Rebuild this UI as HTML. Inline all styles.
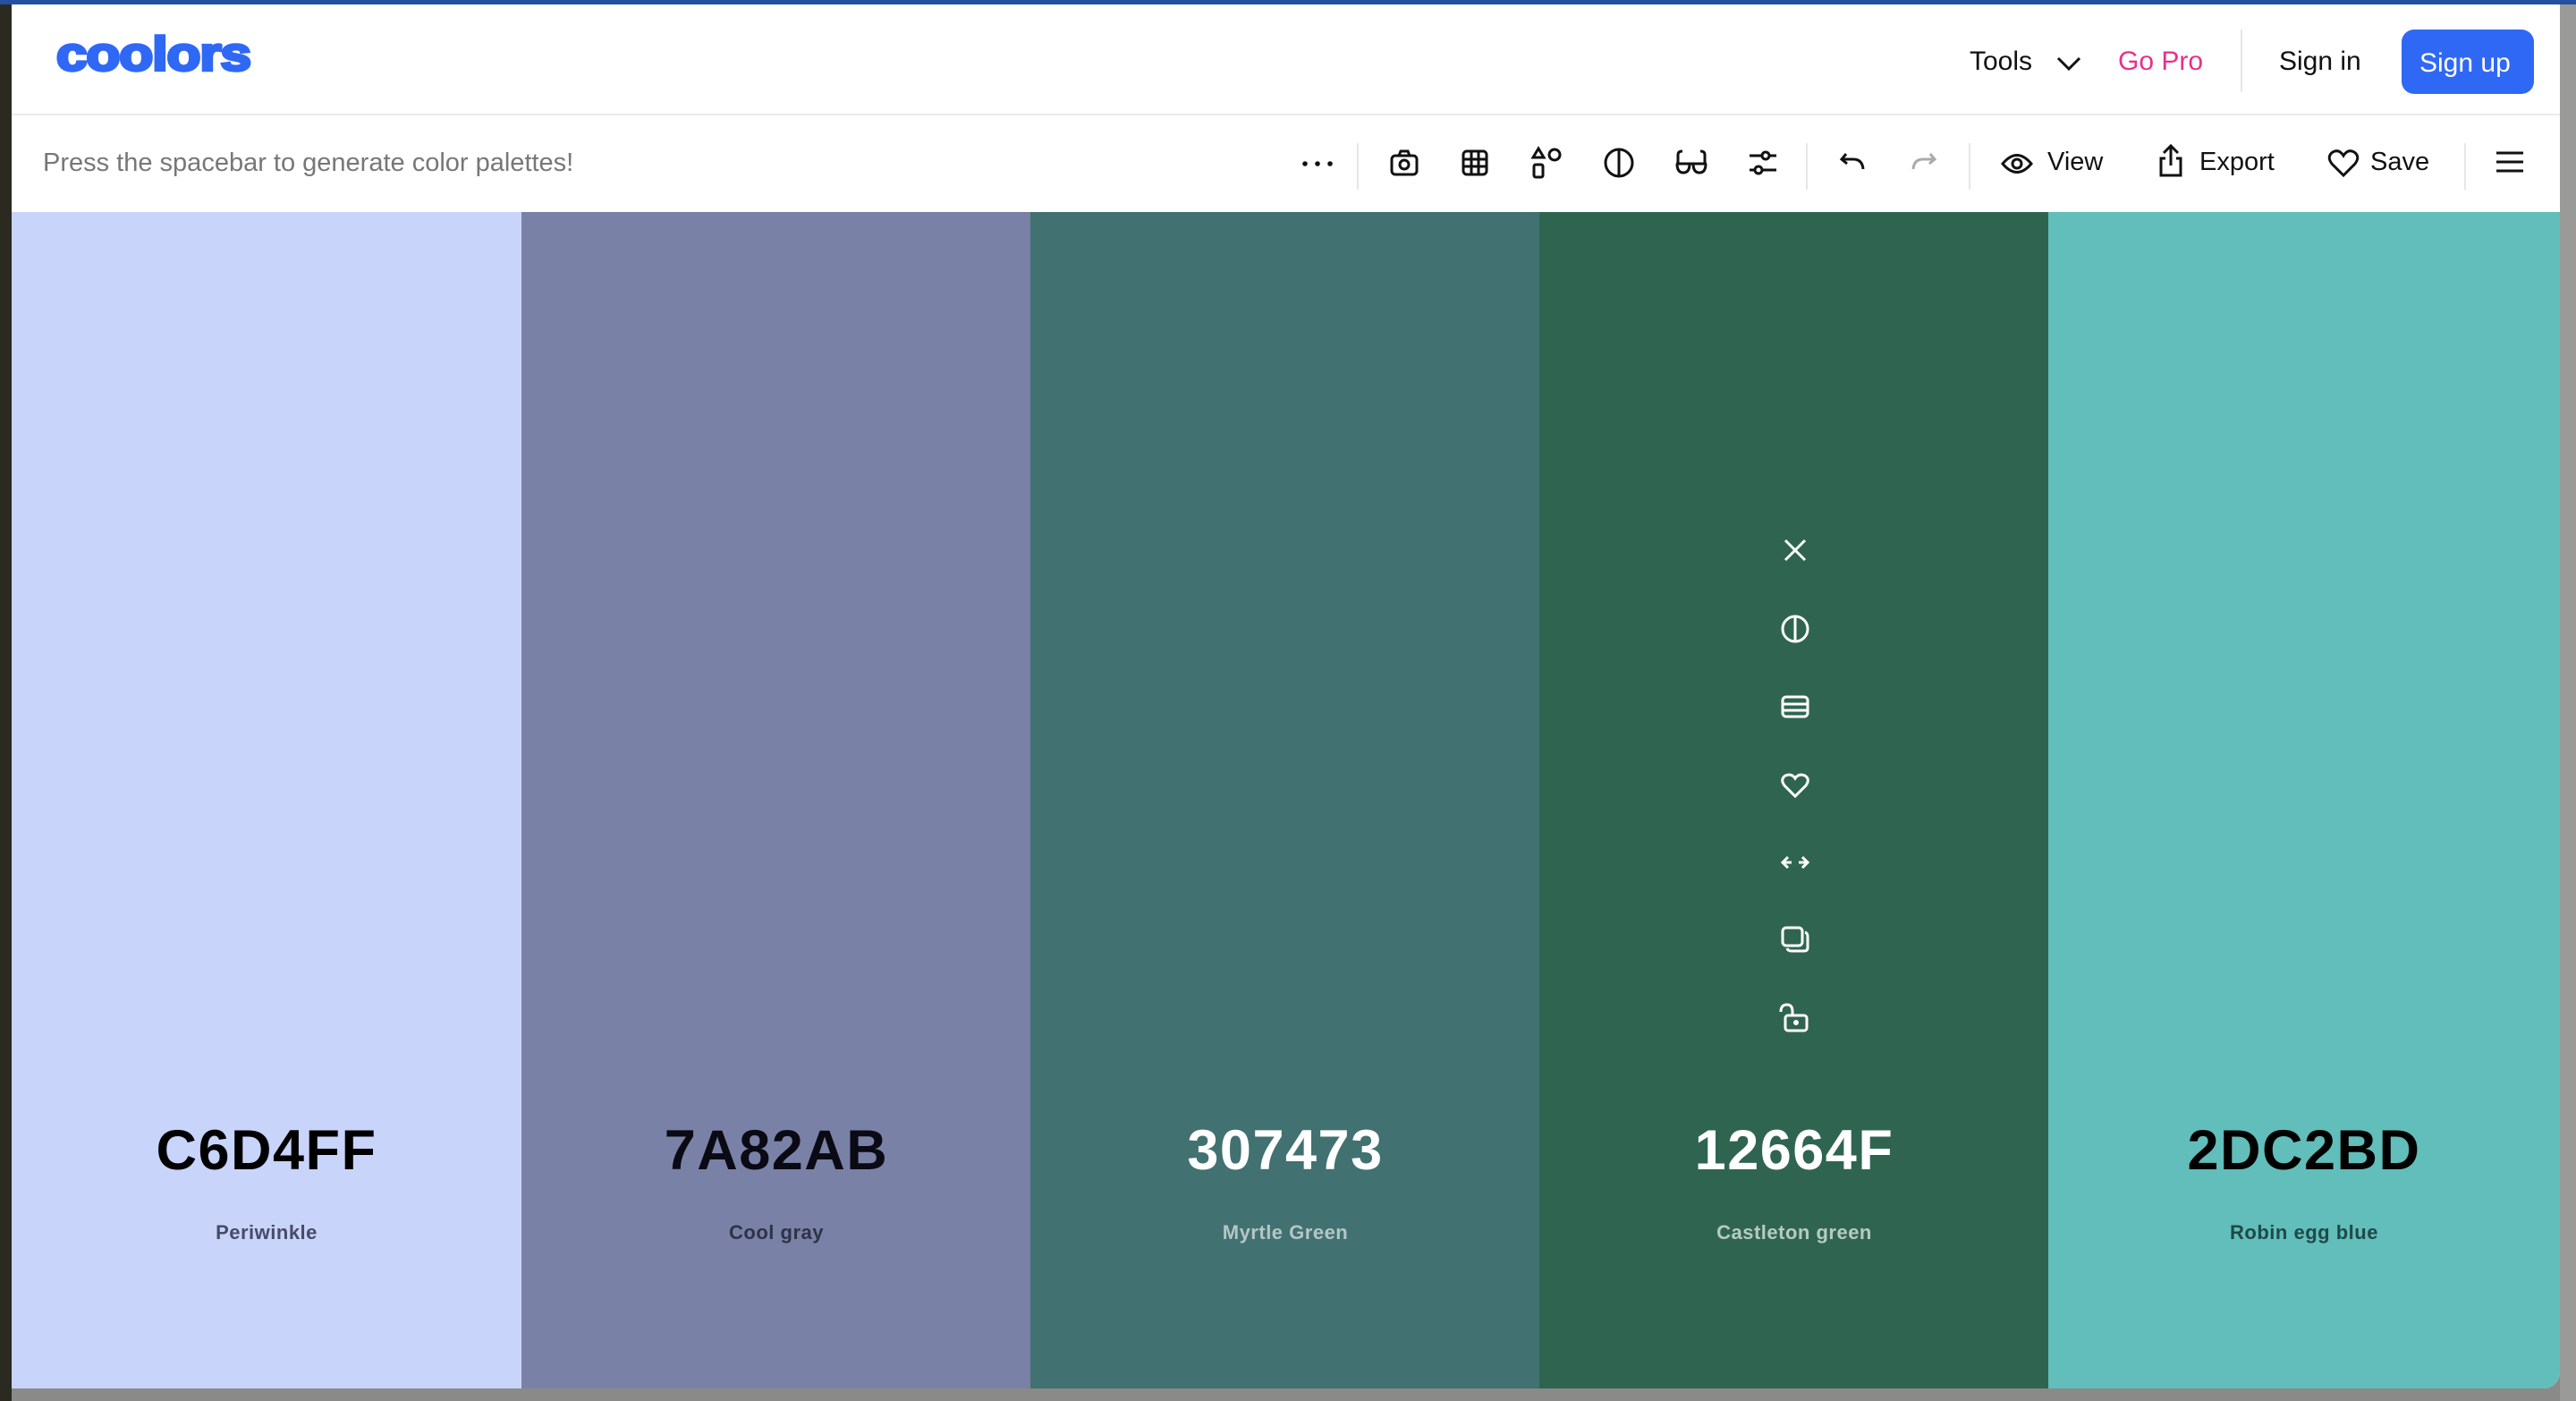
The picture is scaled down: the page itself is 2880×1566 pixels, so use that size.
<!DOCTYPE html>
<html><head><meta charset="utf-8"><style>
*{margin:0;padding:0;box-sizing:border-box}
body{width:2880px;height:1566px;overflow:hidden;background:#8a8a88;font-family:"Liberation Sans",sans-serif;position:relative}
.abs{position:absolute}
#leftbg{left:0;top:0;width:13px;height:1566px;background:#2a2a20}
#rightbg{left:2862px;top:0;width:18px;height:1566px;background:#9a9a98}
#topbar{left:0;top:0;width:2880px;height:5px;background:#2350a0}
#win{left:13px;top:5px;width:2849px;height:1547px;background:#fff;border-radius:0 0 18px 18px;overflow:hidden}
#hdrline{left:0;top:122px;width:2849px;height:2px;background:#ebebeb}
.col{position:absolute;top:237px;height:1315px;width:570px}
.hex{position:absolute;top:1013px;width:100%;text-align:center;font-size:63px;font-weight:700;letter-spacing:1.5px;line-height:72px}
.nm{position:absolute;top:1128px;width:100%;text-align:center;font-size:22px;font-weight:700;letter-spacing:.5px;line-height:26px}
.t{position:absolute;font-size:30px;color:#111;white-space:nowrap}
.div{position:absolute;width:2px;background:#e6e6e6}
svg{position:absolute;overflow:visible}
</style></head><body>
<div class="abs" id="leftbg"></div>
<div class="abs" id="rightbg"></div>
<div class="abs" id="topbar"></div>
<div class="abs" id="win">
 <div class="abs" id="hdrline"></div>
 <div class="t" style="left:50px;top:30px;font-size:62px;line-height:62px;font-weight:900;color:#2f68f5;letter-spacing:-1px;-webkit-text-stroke:4px #2f68f5;transform:scaleX(1.0) scaleY(0.85);transform-origin:left top">coolors</div>
 <div class="t" style="left:2189px;top:47px">Tools</div>
 <svg style="left:2285px;top:56px" width="30" height="20"><path d="M3 4 L15 16 L27 4" fill="none" stroke="#111" stroke-width="3"/></svg>
 <div class="t" style="left:2355px;top:47px;color:#e8308c">Go Pro</div>
 <div class="div" style="left:2492px;top:28px;height:70px"></div>
 <div class="t" style="left:2535px;top:47px">Sign in</div>
 <div class="abs" style="left:2672px;top:28px;width:148px;height:72px;background:#2f68f5;border-radius:14px"></div>
 <div class="t" style="left:2692px;top:49px;color:#fff">Sign up</div>

 <div class="t" style="left:35px;top:161px;font-size:29px;color:#777">Press the spacebar to generate color palettes!</div>
 <svg style="left:1440px;top:168px" width="40" height="20"><circle cx="6" cy="10" r="2.8" fill="#111"/><circle cx="20" cy="10" r="2.8" fill="#111"/><circle cx="34" cy="10" r="2.8" fill="#111"/></svg>
 <div class="div" style="left:1504px;top:155px;height:52px"></div>
 <svg style="left:1541px;top:162px" width="32" height="30" fill="none" stroke="#111" stroke-width="3"><rect x="2" y="7" width="28" height="21" rx="4"/><path d="M10 7 L12 2 H20 L22 7"/><circle cx="16" cy="17" r="5"/></svg>
 <svg style="left:1621px;top:162px" width="30" height="30" fill="none" stroke="#111" stroke-width="3"><rect x="2" y="2" width="26" height="26" rx="4"/><path d="M11 2V28M19 2V28M2 11H28M2 19H28"/></svg>
 <svg style="left:1699px;top:159px" width="36" height="36" fill="none" stroke="#111" stroke-width="3"><path d="M8 2 L14 12 H2 Z"/><circle cx="26" cy="9" r="6"/><rect x="3" y="20" width="10" height="14" rx="2"/></svg>
 <svg style="left:1780px;top:160px" width="34" height="34" fill="none" stroke="#111" stroke-width="3"><circle cx="17" cy="17" r="15"/><path d="M17 2V32"/></svg>
 <svg style="left:1859px;top:162px" width="38" height="28" fill="none" stroke="#111" stroke-width="3"><path d="M4 16 V6 Q4 2 9 2 M34 16 V6 Q34 2 29 2 M2 16 H36"/><path d="M3 16 Q3 26 10 26 Q17 26 17 16 M21 16 Q21 26 28 26 Q35 26 35 16"/></svg>
 <svg style="left:1941px;top:159px" width="34" height="36" fill="none" stroke="#111" stroke-width="3"><path d="M2 10H32M2 26H32"/><circle cx="20" cy="10" r="4" fill="#fff"/><circle cx="12" cy="26" r="4" fill="#fff"/></svg>
 <div class="div" style="left:2006px;top:155px;height:52px"></div>
 <svg style="left:2043px;top:164px" width="30" height="24" fill="none" stroke="#111" stroke-width="3"><path d="M8 3 L3 9 L9 14 M3 9 H16 Q26 9 27 20"/></svg>
 <svg style="left:2123px;top:164px" width="30" height="24" fill="none" stroke="#aaa" stroke-width="3"><path d="M22 3 L27 9 L21 14 M27 9 H14 Q4 9 3 20"/></svg>
 <div class="div" style="left:2188px;top:155px;height:52px"></div>
 <svg style="left:2224px;top:165px" width="36" height="26" fill="none" stroke="#111" stroke-width="3"><path d="M2 13 Q18 -6 34 13 Q18 32 2 13Z"/><circle cx="18" cy="13" r="5"/></svg>
 <div class="t" style="left:2276px;top:160px;font-size:29px">View</div>
 <svg style="left:2399px;top:156px" width="30" height="38" fill="none" stroke="#111" stroke-width="3"><path d="M15 24V3 M7 10 L15 2 L23 10 M9 16 H4 V35 H26 V16 H21"/></svg>
 <div class="t" style="left:2446px;top:160px;font-size:29px">Export</div>
 <svg style="left:2590px;top:162px" width="34" height="32" fill="none" stroke="#111" stroke-width="3"><path d="M17 29 L4 16 Q-2 8 5 3 Q12 -1 17 7 Q22 -1 29 3 Q36 8 30 16 Z"/></svg>
 <div class="t" style="left:2637px;top:160px;font-size:29px">Save</div>
 <div class="div" style="left:2742px;top:155px;height:52px"></div>
 <svg style="left:2778px;top:163px" width="30" height="26" stroke="#111" stroke-width="3"><path d="M0 3H30M0 13H30M0 23H30"/></svg>
</div>

<div class="col" style="left:13px;background:#c8d4fa"><div class="hex" style="color:#000">C6D4FF</div><div class="nm" style="color:#474c66">Periwinkle</div></div>
<div class="col" style="left:583px;background:#7a81a7"><div class="hex" style="color:#0a0a14">7A82AB</div><div class="nm" style="color:#2e3346">Cool gray</div></div>
<div class="col" style="left:1152px;background:#417170"><div class="hex" style="color:#fff">307473</div><div class="nm" style="color:#b4c6c6">Myrtle Green</div></div>
<div class="col" style="left:1721px;background:#2f6550"><div class="hex" style="color:#fff">12664F</div><div class="nm" style="color:#b6cbc2">Castleton green</div>
 <svg style="left:273px;top:365px" width="26" height="26" stroke="#fff" stroke-width="3"><path d="M2 2L24 24M24 2L2 24"/></svg>
 <svg style="left:270px;top:450px" width="32" height="32" fill="none" stroke="#fff" stroke-width="3"><circle cx="16" cy="16" r="14"/><path d="M16 2V30"/></svg>
 <svg style="left:270px;top:540px" width="32" height="26" fill="none" stroke="#fff" stroke-width="3"><rect x="2" y="2" width="28" height="22" rx="4"/><path d="M2 10H30M2 17H30"/></svg>
 <svg style="left:270px;top:627px" width="32" height="28" fill="none" stroke="#fff" stroke-width="3"><path d="M16 26 L4 14 Q-1 7 5 3 Q12 0 16 6 Q20 0 27 3 Q33 7 28 14 Z"/></svg>
 <svg style="left:270px;top:719px" width="32" height="16" fill="none" stroke="#fff" stroke-width="3"><path d="M8 2 L2 8 L8 14 M2 8H12 M24 2 L30 8 L24 14 M30 8H20"/></svg>
 <svg style="left:270px;top:798px" width="32" height="30" fill="none" stroke="#fff" stroke-width="3"><rect x="2" y="2" width="22" height="20" rx="4"/><path d="M27 7 Q30 8 30 12 V24 Q30 28 26 28 H12 Q8 28 7 25"/></svg>
 <svg style="left:267px;top:884px" width="34" height="34" fill="none" stroke="#fff" stroke-width="3"><path d="M3 10 Q3 2 10 2 Q16 2 16 10 V14"/><rect x="8" y="14" width="24" height="17" rx="3"/><circle cx="20" cy="22" r="1.5" fill="#fff"/></svg>
</div>
<div class="col" style="left:2290px;width:572px;background:#61beba;border-radius:0 0 18px 0"><div class="hex" style="color:#000">2DC2BD</div><div class="nm" style="color:#1f4948">Robin egg blue</div></div>
</body></html>
